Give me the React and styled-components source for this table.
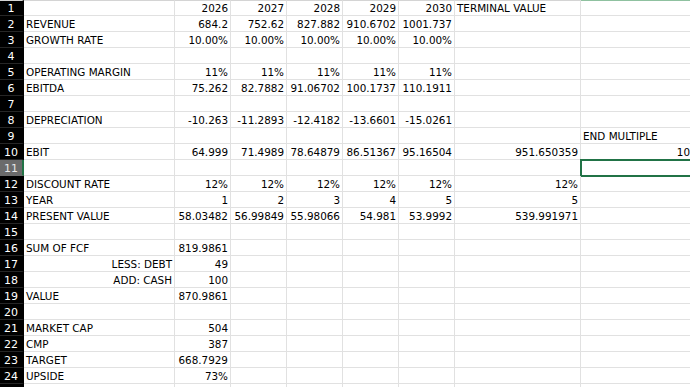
import React from 'react';
import styled, { createGlobalStyle } from 'styled-components';

const GlobalStyle = createGlobalStyle`
  html, body {
    margin: 0;
    padding: 0;
    background: #ffffff;
    overflow: hidden;
  }
`;

const Sheet = styled.div`
  display: grid;
  grid-template-columns: 24px 151px repeat(5, 56px) 126px 112px;
  grid-auto-rows: 16px;
  width: 692px;
  font-family: 'DejaVu Sans', 'Liberation Sans', sans-serif;
  font-size: 10.4px;
  color: #000000;
`;

const RowHead = styled.div`
  background: ${(p) => (p.$active ? '#6b6b6b' : '#000000')};
  color: ${(p) => (p.$active ? '#e6e6e6' : '#ffffff')};
  border-bottom: 1px solid ${(p) => (p.$active ? '#6b6b6b' : '#262626')};
  border-right: 2px solid ${(p) => (p.$active ? '#217346' : '#000000')};
  border-top: ${(p) => (p.$first ? '1px solid #d4d4d4' : 'none')};
  box-sizing: border-box;
  display: flex;
  align-items: center;
  justify-content: center;
  padding-top: 1px;
  font-size: 11px;
  line-height: 15px;
`;

const Cell = styled.div`
  box-sizing: border-box;
  border-right: 1px solid #e1e1e1;
  border-bottom: 1px solid #e1e1e1;
  border-top: ${(p) => (p.$first ? `1px solid ${p.$green ? '#8fc1a0' : '#d4d4d4'}` : 'none')};
  padding: ${(p) => (p.$first ? '0' : '1px')} 2px 0;
  line-height: 15px;
  white-space: nowrap;
  overflow: hidden;
  text-align: ${(p) => p.$align || 'left'};
  outline: ${(p) => (p.$selected ? '2px solid #217346' : 'none')};
  outline-offset: -1px;
`;

const rows = [
  ['', '2026', '2027', '2028', '2029', '2030', 'TERMINAL VALUE', ''],
  ['REVENUE', '684.2', '752.62', '827.882', '910.6702', '1001.737', '', ''],
  ['GROWTH RATE', '10.00%', '10.00%', '10.00%', '10.00%', '10.00%', '', ''],
  [],
  ['OPERATING MARGIN', '11%', '11%', '11%', '11%', '11%', '', ''],
  ['EBITDA', '75.262', '82.7882', '91.06702', '100.1737', '110.1911', '', ''],
  [],
  ['DEPRECIATION', '-10.263', '-11.2893', '-12.4182', '-13.6601', '-15.0261', '', ''],
  ['', '', '', '', '', '', '', 'END MULTIPLE'],
  ['EBIT', '64.999', '71.4989', '78.64879', '86.51367', '95.16504', '951.650359', '10'],
  [],
  ['DISCOUNT RATE', '12%', '12%', '12%', '12%', '12%', '12%', ''],
  ['YEAR', '1', '2', '3', '4', '5', '5', ''],
  ['PRESENT VALUE', '58.03482', '56.99849', '55.98066', '54.981', '53.9992', '539.991971', ''],
  [],
  ['SUM OF FCF', '819.9861'],
  ['>LESS: DEBT', '49'],
  ['>ADD: CASH', '100'],
  ['VALUE', '870.9861'],
  [],
  ['MARKET CAP', '504'],
  ['CMP', '387'],
  ['TARGET', '668.7929'],
  ['UPSIDE', '73%'],
  [],
];

// labels are left aligned, numbers right aligned; '>' marks a right aligned label
const textCols = { 6: 'TERMINAL VALUE', 7: 'END MULTIPLE' };

const alignFor = (col, value) => {
  if (col === 0) return value.startsWith('>') ? 'right' : 'left';
  if (value === textCols[col]) return 'left';
  return 'right';
};

const App = () => (
  <>
    <GlobalStyle />
    <Sheet>
      {rows.map((row, r) => {
        const n = r + 1;
        return (
          <React.Fragment key={n}>
            <RowHead $active={n === 11} $first={n === 1}>
              {n < rows.length ? n : ''}
            </RowHead>
            {Array.from({ length: 8 }).map((_, c) => {
              const value = row[c] || '';
              return (
                <Cell
                  key={c}
                  $first={n === 1}
                  $green={c === 7}
                  $selected={n === 11 && c === 7}
                  $align={alignFor(c, value)}
                >
                  {value.replace(/^>/, '')}
                </Cell>
              );
            })}
          </React.Fragment>
        );
      })}
    </Sheet>
  </>
);

export default App;
